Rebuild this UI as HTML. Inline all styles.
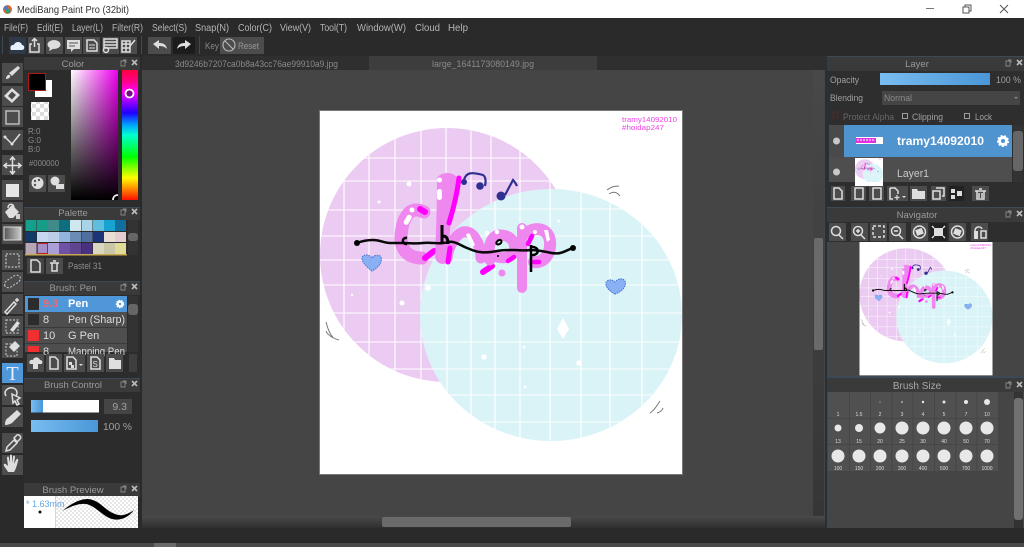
<!DOCTYPE html>
<html><head><meta charset="utf-8"><title>MediBang Paint Pro</title>
<style>
html,body{margin:0;padding:0;background:#2a2a2a;width:1024px;height:547px;overflow:hidden}
svg{display:block;filter:blur(.35px)}
text{font-family:"Liberation Sans",sans-serif;fill:#a8a8a8;font-size:10px}
.m{font-size:10.5px;fill:#b5b5b5}
.h{font-size:9.5px;fill:#9a9a9a;text-anchor:middle}
.b{fill:#4c4c4c}
.i{fill:#dedede}
.s{fill:none;stroke:#dedede;stroke-width:1.5}
.z{font-size:5px;fill:#ddd;text-anchor:middle}
</style></head><body>
<svg width="1024" height="547" viewBox="0 0 1024 547" xmlns="http://www.w3.org/2000/svg">
<defs>
<symbol id="dock" width="20" height="8" viewBox="0 0 20 8"><path d="M1 2h4v5H1zM3 1h3v3" fill="none" stroke="#888" stroke-width=".9"/><path d="M12 1l5 5M17 1l-5 5" stroke="#bbb" stroke-width="1.600"/></symbol>
<clipPath id="cv"><rect x="320" y="111" width="362" height="363"/></clipPath>
<clipPath id="pc"><circle cx="447" cy="255" r="127"/></clipPath>
<clipPath id="bc"><ellipse cx="551" cy="315" rx="131" ry="126"/></clipPath>
<linearGradient id="hue" x1="0" y1="0" x2="0" y2="1">
<stop offset="0" stop-color="#ff0040"/><stop offset=".08" stop-color="#ff0080"/><stop offset=".17" stop-color="#ff00ff"/><stop offset=".33" stop-color="#2000ff"/><stop offset=".42" stop-color="#00a0ff"/><stop offset=".5" stop-color="#00ffd0"/><stop offset=".67" stop-color="#00ff00"/><stop offset=".83" stop-color="#ffff00"/><stop offset="1" stop-color="#ff1000"/>
</linearGradient>
<linearGradient id="sv1"><stop offset="0" stop-color="#fff"/><stop offset="1" stop-color="#f000f0"/></linearGradient>
<linearGradient id="sv2" x1="0" y1="0" x2="0" y2="1"><stop offset="0" stop-color="#000" stop-opacity="0"/><stop offset="1" stop-color="#000"/></linearGradient>
<linearGradient id="blu"><stop offset="0" stop-color="#79bdf0"/><stop offset="1" stop-color="#4a96d8"/></linearGradient>
<linearGradient id="gry"><stop offset="0" stop-color="#555"/><stop offset="1" stop-color="#ccc"/></linearGradient>
<linearGradient id="sb" x1="0" y1="0" x2="0" y2="1"><stop offset="0" stop-color="#4a4a4a"/><stop offset="1" stop-color="#2c2c2c"/></linearGradient>
<pattern id="chk" width="8" height="8" patternUnits="userSpaceOnUse"><rect width="8" height="8" fill="#fff"/><rect width="4" height="4" fill="#ddd"/><rect x="4" y="4" width="4" height="4" fill="#ddd"/></pattern>
<pattern id="chk2" width="4" height="4" patternUnits="userSpaceOnUse"><rect width="4" height="4" fill="#fff"/><rect width="2" height="2" fill="#e6e6e6"/><rect x="2" y="2" width="2" height="2" fill="#e6e6e6"/></pattern>
<g id="art">
<rect x="320" y="111" width="362" height="363" fill="#fff"/>
<g clip-path="url(#cv)">
<circle cx="447" cy="255" r="127" fill="#eccbf2"/>
<g clip-path="url(#pc)" stroke="#fff" stroke-width="1.100">
<path d="M344 120V390M369 120V390M395 120V390M421 120V390M446 120V390M471 120V390M491 120V390M520 120V390M550 120V390M320 158H580M320 181H580M320 210H580M320 236H580M320 260H580M320 285H580M320 313H580M320 342H580M320 369H580"/>
<circle cx="409" cy="184" r="2.500" fill="#fff" stroke="none"/><circle cx="379" cy="202" r="1.500" fill="#fff" stroke="none"/><circle cx="402" cy="303" r="2.500" fill="#fff" stroke="none"/><circle cx="352" cy="295" r="1.200" fill="#fff" stroke="none"/>
</g>
<ellipse cx="551" cy="315" rx="131" ry="126" fill="#d9f3f7"/>
<g clip-path="url(#bc)" stroke="#fff" stroke-width="1.100">
<path d="M447 180V450M471 180V450M495 180V450M520 180V450M550 180V450M581 180V450M610 180V450M642 180V450M420 209H690M420 236H690M420 260H690M420 285H690M420 313H690M420 342H690M420 369H690M420 395H690M420 422H690"/>
<g fill="#fff" stroke="none"><circle cx="484" cy="357" r="2.800"/><circle cx="579" cy="363" r="2.800"/><circle cx="524" cy="347" r="1.500"/><circle cx="525" cy="387" r="1.500"/><circle cx="428" cy="288" r="2.800"/><circle cx="559" cy="221" r="1.500"/><path d="M563 318l6 11-6 10-6-10z"/></g>
</g>
<!-- lettering -->
<g fill="none" stroke-linecap="round" stroke-linejoin="round">
<path d="M424 212C418 209 412 209 408 214C403 220 401 230 401 240C402 252 410 258 422 258" stroke="#ee88ee" stroke-width="13"/>
<path d="M420 209l5 3" stroke="#ff00ff" stroke-width="6"/>
<path d="M425 258l9-7" stroke="#ff00ff" stroke-width="6"/>
<path d="M437 178C441 171 455 171 459 180C459 195 454 210 451 222C449 235 449 250 449 260C445 266 438 265 435 258C436 235 437 205 437 178Z" fill="#ee88ee"/>
<path d="M459 178C457 195 453 210 449 223" stroke="#ff00ff" stroke-width="5"/>
<path d="M447 258C448 250 452 240 458 235C464 229 471 232 475 238C479 244 481 250 481 258" stroke="#ee88ee" stroke-width="11"/>
<path d="M448 262l2-14" stroke="#ff00ff" stroke-width="5"/>
<path d="M483 272l9-6" stroke="#ff00ff" stroke-width="6"/>
<path d="M490 260C487 245 492 235 500 235C510 235 517 242 514 252C510 259 500 259 493 255" stroke="#ee88ee" stroke-width="11"/>
<path d="M522 228V288" stroke="#ee88ee" stroke-width="10"/>
<path d="M527 233C535 226 549 228 550 242C551 254 544 263 534 262" stroke="#ee88ee" stroke-width="12"/>
<path d="M514 257l-6 4M532 236l-4 8M534 262h5" stroke="#ff00ff" stroke-width="4.500"/>
</g>
<g fill="#fff"><rect x="437" y="189" width="5" height="11" rx="2.500"/><circle cx="439.500" cy="180" r="2.500"/><rect x="405" y="214" width="5" height="11" rx="2.500" transform="rotate(30 407 220)"/><circle cx="412" cy="210" r="2.500"/><path d="M466 235a2.500 2.500 0 0 1 4-1l5 11-3 2z"/><circle cx="487" cy="233" r="2.200"/><circle cx="497" cy="232" r="2.200"/><circle cx="522" cy="227" r="2.500"/><circle cx="535" cy="232" r="2"/><path d="M544 230l4 0 2 10-3 2z"/></g>
<circle cx="502" cy="273" r="3.500" fill="#ee88ee"/>
<!-- wavy line -->
<path d="M357 243C362 241 368 240 373 240C380 240 384 243 390 243C395 243 399 243 403 243C410 243 416 244 423 243C430 242 437 244 443 243C447 243 450 241 453 242C458 243 462 246 467 248C472 250 476 252 480 252C486 253 491 252 497 251C502 250 508 250 513 250C519 250 525 251 530 250C536 250 541 251 547 252C551 253 556 254 560 253C565 252 569 249 573 248" fill="none" stroke="#0a0a0a" stroke-width="2.500" stroke-linecap="round"/>
<circle cx="357" cy="243" r="3" fill="#000"/><circle cx="573" cy="248" r="3" fill="#000"/>
<path d="M407 238C402 237 401 244 407 244M531 245V272M531 247C540 246 540 256 531 255" fill="none" stroke="#000" stroke-width="2.500"/>
<path d="M442 225V243M443 236C447 236 448 240 448 244" fill="none" stroke="#000" stroke-width="3"/>
<path d="M496 243C499 238 503 240 501 243C499 245 497 245 496 243" fill="none" stroke="#000" stroke-width="2"/>
<circle cx="498" cy="256" r="1" fill="#000"/>
<!-- notes -->
<g fill="none" stroke="#2f2f90" stroke-width="2.200"><path d="M464 180C466 172 472 172 483 175C486 177 486 182 485 186"/><path d="M505 195L513 180C514 181 516 184 517 186"/></g>
<g fill="#2f2f90"><circle cx="464" cy="182" r="3"/><circle cx="480" cy="186" r="3.800"/><circle cx="501" cy="196" r="4.500"/></g>
<!-- hearts -->
<path d="M372 271C364 265 360 259 363 256C366 254 370 255 372 258C374 255 379 254 381 257C383 262 378 268 372 271Z" fill="#8ab0f4" stroke="#3f6fd0" stroke-width="1" stroke-dasharray="1.500 1"/>
<path d="M615 294C607 290 604 284 607 281C610 279 613 280 615 282C618 278 623 278 625 281C627 286 622 292 615 294Z" fill="#8ab0f4" stroke="#3f6fd0" stroke-width="1" stroke-dasharray="1.500 1"/>
<!-- ticks -->
<g fill="none" stroke="#777" stroke-width="1"><path d="M607 190C611 187 614 186 619 186M609 194C613 191 617 192 620 196M326 322C328 330 331 336 333 337M326 331C328 336 335 339 339 340M650 413C655 410 657 405 660 401M657 413C660 412 662 411 663 408"/></g>
<text x="622" y="122" style="font-size:7.500px;fill:#f044e8" textLength="55" lengthAdjust="spacingAndGlyphs">tramy14092010</text>
<text x="622" y="130" style="font-size:7.500px;fill:#f044e8" textLength="42" lengthAdjust="spacingAndGlyphs">#hoidap247</text>
</g>
</g>
</defs>

<rect width="1024" height="547" fill="#2a2a2a"/>
<!-- title bar -->
<rect width="1024" height="18" fill="#fff"/>
<circle cx="7.500" cy="9.500" r="4.500" fill="#d66a3a"/><circle cx="8" cy="11" r="2.500" fill="#3a9a6a"/><circle cx="6" cy="8" r="2" fill="#4a7ac8"/>
<text x="17" y="13" style="font-size:10.500px;fill:#333" textLength="112" lengthAdjust="spacingAndGlyphs">MediBang Paint Pro (32bit)</text>
<path d="M926 8.500h8" stroke="#777" stroke-width="1"/>
<path d="M963 7h6v6h-6zM965 7V5h6v6h-2" fill="none" stroke="#555" stroke-width="1"/>
<path d="M1000 5l8 8M1008 5l-8 8" stroke="#555" stroke-width="1"/>

<!-- menu -->
<g class="menu">
<text class="m" x="4" y="31" textLength="24" lengthAdjust="spacingAndGlyphs">File(F)</text>
<text class="m" x="37" y="31" textLength="26" lengthAdjust="spacingAndGlyphs">Edit(E)</text>
<text class="m" x="72" y="31" textLength="31" lengthAdjust="spacingAndGlyphs">Layer(L)</text>
<text class="m" x="112" y="31" textLength="31" lengthAdjust="spacingAndGlyphs">Filter(R)</text>
<text class="m" x="152" y="31" textLength="35" lengthAdjust="spacingAndGlyphs">Select(S)</text>
<text class="m" x="195" y="31" textLength="34" lengthAdjust="spacingAndGlyphs">Snap(N)</text>
<text class="m" x="238" y="31" textLength="34" lengthAdjust="spacingAndGlyphs">Color(C)</text>
<text class="m" x="280" y="31" textLength="31" lengthAdjust="spacingAndGlyphs">View(V)</text>
<text class="m" x="320" y="31" textLength="27" lengthAdjust="spacingAndGlyphs">Tool(T)</text>
<text class="m" x="357" y="31" textLength="49" lengthAdjust="spacingAndGlyphs">Window(W)</text>
<text class="m" x="415" y="31" textLength="25" lengthAdjust="spacingAndGlyphs">Cloud</text>
<text class="m" x="448" y="31" textLength="20" lengthAdjust="spacingAndGlyphs">Help</text>
</g>

<!-- toolbar -->
<rect x="2" y="36" width="1" height="18" fill="#3a4a5a"/>
<g class="b"><rect x="9" y="37" width="17" height="17" fill="#2e3a48"/><rect x="28" y="37" width="16" height="17"/><rect x="46" y="37" width="17" height="17"/><rect x="65" y="37" width="17" height="17"/><rect x="83" y="37" width="17" height="17"/><rect x="102" y="37" width="17" height="17"/><rect x="120" y="37" width="17" height="17"/><rect x="148" y="37" width="23" height="17"/></g>
<rect x="173" y="37" width="22" height="17" fill="#1c1c1c"/>
<rect x="141" y="36" width="1" height="18" fill="#3a4a5a"/><rect x="199" y="36" width="1" height="18" fill="#3a4a5a"/>
<rect x="220" y="37" width="44" height="17" fill="#4c4c4c"/>
<path d="M11 50c-2-4 2-6 3-5 1-4 7-4 8 0 3 0 3 5 0 5z" fill="#e8f2ff"/>
<path d="M32 44h-2v8h9v-8h-2M34.500 47v-8M32 41l2.500-2.500L37 41" class="s" stroke-width="1.200"/>
<ellipse cx="54" cy="44.500" rx="6.500" ry="4.500" class="i"/><path d="M50 47l-1 4 4-2z" class="i"/>
<rect x="67" y="40" width="13" height="9" class="i"/><path d="M71 49v3l3-3z" class="i"/><path d="M69 43h9M69 46h6" stroke="#555"/>
<path d="M87 40h7l3 3v8H87z" class="s" stroke-width="1"/><path d="M89 45h6M89 48h6" stroke="#ddd"/>
<path d="M104 39h13v9h-13zM104 42h13M104 45h13" class="s" stroke-width="1"/><circle cx="106" cy="50" r="2.500" class="s" stroke-width="1"/>
<path d="M122 41h8v11h-8zM122 44h8M122 48h8M126 41v11" class="s" stroke-width="1.400"/><path d="M130 46l5-6" stroke="#ddd" stroke-width="1.500"/>
<path d="M153 44l6-4v3c4 0 7 1 8 6-2-2-4-3-8-3v3z" class="i"/>
<path d="M191 44l-6-4v3c-4 0-7 1-8 6 2-2 4-3 8-3v3z" class="i"/>
<text x="205" y="49" style="fill:#888;font-size:9.500px" textLength="14" lengthAdjust="spacingAndGlyphs">Key</text>
<circle cx="229" cy="45" r="6" fill="none" stroke="#bbb" stroke-width="1.100"/><path d="M225 41l8 8" stroke="#bbb" stroke-width="1.100"/>
<text x="238" y="49" style="fill:#999;font-size:9.500px" textLength="21" lengthAdjust="spacingAndGlyphs">Reset</text>

<!-- tabs -->
<rect x="142" y="56" width="683" height="14" fill="#2f2f2f"/>
<rect x="369" y="56" width="228" height="14" fill="#3d3d3d"/>
<text x="175" y="67" style="fill:#8a8a8a;font-size:9.500px" textLength="163" lengthAdjust="spacingAndGlyphs">3d9246b7207ca0b8a43cc76ae99910a9.jpg</text>
<text x="432" y="67" style="fill:#8a8a8a;font-size:9.500px" textLength="102" lengthAdjust="spacingAndGlyphs">large_1641173080149.jpg</text>

<!-- canvas -->
<rect x="142" y="70" width="683" height="446" fill="#454545"/>
<rect x="319" y="110" width="364" height="365" fill="#777"/>
<use href="#art"/>

<!-- canvas scrollbars -->
<rect x="813" y="70" width="11" height="446" fill="url(#sb)" opacity=".6"/>
<rect x="814" y="238" width="9" height="112" rx="2" fill="#6a6a6a"/>
<rect x="142" y="516" width="683" height="13" fill="url(#sb)"/>
<rect x="382" y="517" width="189" height="10" rx="2" fill="#6a6a6a"/>
<rect x="825" y="56" width="2" height="472" fill="#26303a"/>

<!-- left tools -->
<g class="b">
<rect x="2" y="63" width="21" height="20"/><rect x="2" y="86" width="21" height="20"/><rect x="2" y="107" width="21" height="20"/><rect x="2" y="130" width="21" height="20"/><rect x="2" y="155" width="21" height="20"/><rect x="2" y="180" width="21" height="20"/><rect x="2" y="202" width="21" height="20"/><rect x="2" y="224" width="21" height="20"/><rect x="2" y="250" width="21" height="20"/><rect x="2" y="272" width="21" height="20"/><rect x="2" y="294" width="21" height="20"/><rect x="2" y="316" width="21" height="20"/><rect x="2" y="338" width="21" height="20"/><rect x="2" y="385" width="21" height="20"/><rect x="2" y="407" width="21" height="20"/><rect x="2" y="433" width="21" height="20"/><rect x="2" y="455" width="21" height="20"/>
</g>
<rect x="2" y="363" width="21" height="20" fill="#4f97d8"/>
<path d="M6 79c0-3 2-5 4-4 1 2-1 4-4 4zM9 73l9-7 2 2-8 8z" class="i"/>
<path d="M12 88l8 7-8 8-8-7zM12 91.500l-4 4.500 4 3.500 4-4.500z" class="i" fill-rule="evenodd"/>
<rect x="6" y="111" width="13" height="13" class="s" style="stroke:#bbb"/>
<path d="M5 137l4 4 3 3 8-10" class="s" stroke-width="2"/><circle cx="5" cy="137" r="1.500" class="i"/><circle cx="12" cy="144" r="1.500" class="i"/>
<path d="M12.500 157v17M4 165.500h17M10 160l2.500-3 2.500 3M10 171l2.500 3 2.500-3M7 163l-3 2.500 3 2.500M18 163l3 2.500-3 2.500" class="s" stroke-width="1.400"/>
<rect x="6" y="184" width="13" height="13" fill="#e6e6e6"/>
<path d="M5 212l7-7 7 7-6 6H9z" class="i"/><path d="M8 208c0-5 6-5 6 0" class="s"/><rect x="16" y="214" width="4" height="5" fill="#cfcfcf"/>
<rect x="4" y="227" width="17" height="13" fill="url(#gry)" stroke="#ddd"/>
<rect x="6" y="254" width="13" height="13" fill="none" stroke="#bbb" stroke-width="1.300" stroke-dasharray="2 1.500"/>
<path d="M5 286c-2-5 4-6 7-9 4-3 10-2 8 3-2 4-6 4-9 7-2 1-5 1-6-1z" fill="none" stroke="#bbb" stroke-width="1.200" stroke-dasharray="2 1.500"/>
<path d="M5 312l9-10 2 2-9 10zM17 298v4M15 300h4" class="s" stroke-width="1.700"/>
<rect x="6" y="320" width="12" height="13" fill="none" stroke="#bbb" stroke-width="1.200" stroke-dasharray="2 1.500"/><path d="M10 330l7-9 3 2-7 9z" class="i"/>
<rect x="6" y="344" width="11" height="12" fill="none" stroke="#bbb" stroke-width="1.200" stroke-dasharray="2 1.500"/><path d="M9 347l6-6 5 5-6 6z" class="i"/>
<text x="12.500" y="380" style="font-family:'Liberation Serif',serif;font-size:20px;fill:#e8f0ff;text-anchor:middle">T</text>
<path d="M6 396c-3-5 2-9 7-8 4 1 5 5 3 8M12 394l8 4-3 2 2 4-2 1-2-4-2 2z" class="s" stroke-width="1.200"/>
<path d="M5 425c0-4 1-6 3-7l9-8 4 4-9 9c-2 1-4 2-7 2z" class="i"/>
<path d="M6 451l1-4 7-7 3 3-7 7zM14 438l3-3c2-1 5 2 3 4l-3 3z" class="s" stroke-width="1.400"/>
<path d="M8 472c-2-4-5-6-4-8 1-1 3 1 4 2l-1-8c0-2 2-2 2 0l1 5v-7c0-2 2-2 2 0v7l1-6c0-2 2-2 2 0l-1 7 2-4c1-2 3-1 2 1-1 4-2 8-4 11z" class="i"/>

<!-- Color panel -->
<rect x="24" y="57" width="116" height="150" fill="#2c2c2c"/>
<rect x="24" y="57" width="116" height="13" fill="#3a3a3a"/>
<text class="h" x="73" y="67">Color</text><use href="#dock" x="120" y="59"/>
<rect x="35" y="80" width="17" height="17" fill="#fff"/>
<rect x="28.500" y="73.500" width="17" height="17" fill="#000" stroke="#b01818" stroke-width="1"/>
<rect x="31" y="102" width="18" height="18" fill="url(#chk)"/>
<text x="28" y="134" style="font-size:8px;fill:#8a8a8a">R:0</text><text x="28" y="143" style="font-size:8px;fill:#8a8a8a">G:0</text><text x="28" y="152" style="font-size:8px;fill:#8a8a8a">B:0</text>
<text x="29" y="166" style="font-size:8px;fill:#8a8a8a" textLength="30" lengthAdjust="spacingAndGlyphs">#000000</text>
<rect x="29" y="175" width="17" height="17" fill="#4c4c4c"/><rect x="48" y="175" width="17" height="17" fill="#4c4c4c"/>
<circle cx="37.500" cy="183" r="6" class="i"/><circle cx="35" cy="181" r="1.200" fill="#555"/><circle cx="39" cy="180" r="1.200" fill="#555"/><circle cx="35" cy="185" r="1.200" fill="#555"/>
<circle cx="55" cy="181" r="4.500" class="i"/><rect x="56" y="184" width="8" height="5" fill="#ddd"/>
<rect x="71" y="70" width="47" height="130" fill="url(#sv1)"/><rect x="71" y="70" width="47" height="130" fill="url(#sv2)"/>
<rect x="122" y="70" width="16" height="130" fill="url(#hue)"/>
<circle cx="129.500" cy="93.500" r="4" fill="#7a0a8a" stroke="#fff" stroke-width="1.800"/>
<path d="M113 200c0-3 2-5 5-5" fill="none" stroke="#eee" stroke-width="1.800"/>

<!-- Palette -->
<rect x="24" y="207" width="116" height="73" fill="#2c2c2c"/>
<rect x="24" y="207" width="116" height="1" fill="#3c4a58"/>
<rect x="24" y="208" width="116" height="12" fill="#3a3a3a"/>
<text class="h" x="73" y="216">Palette</text><use href="#dock" x="120" y="208"/>
<g>
<rect x="25.500" y="220" width="11" height="11" fill="#15a08e"/><rect x="37" y="220" width="11" height="11" fill="#179c88"/><rect x="48" y="220" width="11" height="11" fill="#3f8a8a"/><rect x="59" y="220" width="11" height="11" fill="#0f6d80"/><rect x="70" y="220" width="11" height="11" fill="#cfe8ee"/><rect x="81.500" y="220" width="11" height="11" fill="#a9d4e8"/><rect x="93" y="220" width="11" height="11" fill="#5fbde0"/><rect x="104" y="220" width="11" height="11" fill="#16a3cf"/><rect x="115" y="220" width="11" height="11" fill="#106f9c"/>
<rect x="25.500" y="232" width="11" height="10" fill="#133a66"/><rect x="37" y="232" width="11" height="10" fill="#c5d8ee"/><rect x="48" y="232" width="11" height="10" fill="#bccde6"/><rect x="59" y="232" width="11" height="10" fill="#93b4de"/><rect x="70" y="232" width="11" height="10" fill="#6b8db5"/><rect x="81.500" y="232" width="11" height="10" fill="#4f6f9f"/><rect x="93" y="232" width="11" height="10" fill="#1c3578"/><rect x="104" y="232" width="11" height="10" fill="#eadfd5"/><rect x="115" y="232" width="11" height="10" fill="#e2cdd0"/>
<rect x="25.500" y="243" width="11" height="11" fill="#b6a6b8"/><rect x="37.500" y="243.500" width="10" height="10" fill="#a68fc8" stroke="#c02020"/><rect x="48" y="243" width="11" height="11" fill="#ab9fd8"/><rect x="59" y="243" width="11" height="11" fill="#6f52a8"/><rect x="70" y="243" width="11" height="11" fill="#5f4590"/><rect x="81.500" y="243" width="11" height="11" fill="#4a3080"/><rect x="93" y="243" width="11" height="11" fill="#d8d8c0"/><rect x="104" y="243" width="11" height="11" fill="#c8c8a8"/><rect x="115" y="243" width="11" height="11" fill="#e0dc98"/>
<rect x="25" y="254" width="102" height="1.500" fill="#c8a850"/>
</g>
<rect x="128" y="220" width="10" height="35" fill="#333"/><rect x="128" y="233" width="10" height="8" rx="3" fill="#666"/>
<rect x="27" y="258" width="17" height="16" fill="#454545"/><rect x="46" y="258" width="17" height="16" fill="#4c4c4c"/>
<path d="M31 260h6l3 3v9h-9z" class="s" stroke-width="1"/>
<path d="M50 263h9M52 263v8h5v-8M53 261h3" class="s" stroke-width="1.200"/>
<text x="68" y="269" style="font-size:9px;fill:#8f8f8f" textLength="34" lengthAdjust="spacingAndGlyphs">Pastel 31</text>

<!-- Brush -->
<rect x="24" y="280" width="116" height="97" fill="#2c2c2c"/>
<rect x="24" y="281" width="116" height="1" fill="#3c4a58"/>
<rect x="24" y="282" width="116" height="13" fill="#3a3a3a"/>
<text class="h" x="73" y="291">Brush: Pen</text><use href="#dock" x="120" y="283"/>
<rect x="25" y="296" width="102" height="16" fill="#4f97d8"/>
<rect x="25" y="312" width="102" height="40" fill="#4e4e4e"/>
<path d="M25 327.500h102M25 343.500h102" stroke="#3a3a3a"/>
<rect x="28" y="298" width="11" height="12" fill="#2c2c2c"/>
<rect x="28" y="314" width="11" height="11" fill="#2c2c2c"/>
<rect x="28" y="330" width="11" height="11" fill="#f03030"/>
<rect x="28" y="346" width="11" height="6" fill="#f03030"/>
<text x="43" y="307" style="font-size:11px;font-weight:bold;fill:#f06a6a">9.3</text>
<text x="68" y="307" style="font-size:11px;font-weight:bold;fill:#fff">Pen</text>
<circle cx="120" cy="304" r="3.500" fill="#fff" stroke="#fff" stroke-width="1.500" stroke-dasharray="1.500 1"/><circle cx="120" cy="304" r="1.200" fill="#4f97d8"/>
<text x="43" y="323" style="font-size:11px;fill:#ddd">8</text><text x="68" y="323" style="font-size:11px;fill:#ddd" textLength="57" lengthAdjust="spacingAndGlyphs">Pen (Sharp)</text>
<text x="43" y="339" style="font-size:11px;fill:#ddd">10</text><text x="68" y="339" style="font-size:11px;fill:#ddd">G Pen</text>
<svg x="25" y="344" width="102" height="8" viewBox="25 344 102 8"><text x="43" y="355" style="font-size:11px;fill:#ddd">8</text><text x="68" y="355" style="font-size:11px;fill:#ddd" textLength="57" lengthAdjust="spacingAndGlyphs">Mapping Pen</text></svg>
<rect x="128" y="296" width="10" height="56" fill="#333"/><rect x="128" y="304" width="10" height="11" rx="3" fill="#666"/>
<g class="b"><rect x="27" y="354" width="17" height="18"/><rect x="46" y="354" width="16" height="18"/><rect x="64" y="354" width="21" height="18"/><rect x="87" y="354" width="17" height="18"/><rect x="106" y="354" width="17" height="18"/><rect x="129" y="354" width="8" height="18" fill="#3e3e3e"/></g>
<path d="M30 364c-2-3 1-5 3-4 1-4 6-3 7 0 3 0 3 4 1 4h-3v5h-5v-5z" class="i"/>
<path d="M50 357h5l3 3v9h-8z" class="s" stroke-width="1"/>
<path d="M67 357h6l3 3v9h-9z" class="s" stroke-width="1"/><rect x="69" y="362" width="3" height="3" class="i"/><rect x="71" y="365" width="3" height="3" class="i"/><path d="M79 364h4l-2 2z" class="i"/>
<path d="M91 357h6l3 3v9h-9z" class="s" stroke-width="1"/><text x="92.500" y="367" style="font-size:8px;fill:#ddd">S</text>
<path d="M109 358h5l1 2h6v9h-12z" class="i"/>

<!-- Brush Control -->
<rect x="24" y="377" width="116" height="106" fill="#2c2c2c"/>
<rect x="24" y="378" width="116" height="1" fill="#3c4a58"/>
<rect x="24" y="379" width="116" height="13" fill="#3a3a3a"/>
<text class="h" x="73" y="388">Brush Control</text><use href="#dock" x="120" y="380"/>
<rect x="31" y="400" width="68" height="12.500" fill="#fff"/><rect x="31" y="400" width="12" height="12.500" fill="url(#blu)"/>
<rect x="104" y="399" width="28" height="15" fill="#454545"/>
<text x="127" y="410" style="font-size:10.500px;fill:#a0a0a0;text-anchor:end">9.3</text>
<rect x="31" y="420" width="67" height="12" fill="url(#blu)"/>
<text x="103" y="430" style="font-size:10.500px;fill:#a0a0a0" textLength="29" lengthAdjust="spacingAndGlyphs">100 %</text>

<!-- Brush Preview -->
<rect x="24" y="483" width="116" height="14" fill="#3a3a3a"/>
<text class="h" x="73" y="493">Brush Preview</text><use href="#dock" x="120" y="485"/>
<rect x="24" y="496" width="114" height="32" fill="#fff"/>
<rect x="56" y="496" width="82" height="32" fill="url(#chk2)"/>
<rect x="55" y="496" width=".8" height="32" fill="#ccc"/>
<svg x="24" y="496" width="31" height="32"><text x="2" y="11" style="font-size:9px;fill:#6aa8e0">* 1.63mm</text></svg>
<circle cx="40" cy="512" r="1.500" fill="#111"/>
<path d="M62 511C70 505 78 499 88 499C100 500 104 510 115 514C122 517 128 514 134 510C128 518 120 521 112 519C102 516 96 506 86 504C78 503 70 507 62 511Z" fill="#000"/>

<!-- Right: Layer -->
<rect x="827" y="56" width="197" height="152" fill="#2e2e2e"/>
<rect x="827" y="56" width="197" height="1" fill="#3c4a58"/>
<rect x="827" y="57" width="197" height="14" fill="#3a3a3a"/>
<text class="h" x="917" y="67">Layer</text><use href="#dock" x="1005" y="59"/>
<text x="830" y="83" style="font-size:9.500px;fill:#a0a0a0" textLength="29" lengthAdjust="spacingAndGlyphs">Opacity</text>
<rect x="880" y="73" width="110" height="12" fill="url(#blu)"/>
<text x="996" y="83" style="font-size:9.500px;fill:#a0a0a0" textLength="25" lengthAdjust="spacingAndGlyphs">100 %</text>
<text x="830" y="101" style="font-size:9.500px;fill:#a0a0a0" textLength="33" lengthAdjust="spacingAndGlyphs">Blending</text>
<rect x="882" y="91" width="138" height="14" fill="#454545"/>
<text x="884" y="101" style="font-size:9.500px;fill:#8a8a8a" textLength="28" lengthAdjust="spacingAndGlyphs">Normal</text>
<path d="M1014 97h4l-2 2z" fill="#888"/>
<rect x="833" y="112" width="5" height="6" fill="none" stroke="#5a2a2a" stroke-width=".8"/>
<text x="843" y="120" style="font-size:9.500px;fill:#666" textLength="51" lengthAdjust="spacingAndGlyphs">Protect Alpha</text>
<rect x="902.500" y="113.500" width="5" height="5" fill="none" stroke="#aaa" stroke-width=".9"/>
<text x="912" y="120" style="font-size:9.500px;fill:#a0a0a0" textLength="31" lengthAdjust="spacingAndGlyphs">Clipping</text>
<rect x="964.500" y="113.500" width="5" height="5" fill="none" stroke="#aaa" stroke-width=".9"/>
<text x="975" y="120" style="font-size:9.500px;fill:#a0a0a0" textLength="17" lengthAdjust="spacingAndGlyphs">Lock</text>
<rect x="829" y="125" width="15" height="32" fill="#4a4a4a"/>
<rect x="844" y="125" width="168" height="32" fill="#4f93cf"/>
<rect x="829" y="157" width="183" height="25" fill="#4e4e4e"/>
<circle cx="836.500" cy="141" r="3.500" fill="#c8c8c8"/><circle cx="836.500" cy="172" r="3.500" fill="#c8c8c8"/>
<rect x="856" y="137" width="27" height="7" fill="#fff"/><rect x="856" y="138" width="20" height="5" fill="#e030e0"/><path d="M857 140h18" stroke="#fff" stroke-width="1" stroke-dasharray="2 1"/>
<text x="897" y="145" style="font-size:11.500px;font-weight:bold;fill:#fff" textLength="87" lengthAdjust="spacingAndGlyphs">tramy14092010</text>
<circle cx="1003" cy="141" r="5" fill="#fff" stroke="#fff" stroke-width="2" stroke-dasharray="2 1.500"/><circle cx="1003" cy="141" r="2" fill="#4f93cf"/>
<svg x="855" y="158" width="28" height="24" viewBox="320 111 362 310"><use href="#art"/></svg>
<text x="897" y="177" style="font-size:11px;fill:#c8c8c8" textLength="32" lengthAdjust="spacingAndGlyphs">Layer1</text>
<rect x="1013" y="125" width="10" height="57" fill="#333"/><rect x="1013" y="131" width="10" height="40" rx="3" fill="#666"/>
<g class="b"><rect x="831" y="186" width="14" height="15"/><rect x="851" y="186" width="15" height="15"/><rect x="869" y="186" width="15" height="15"/><rect x="887" y="186" width="21" height="15"/><rect x="910" y="186" width="17" height="15"/><rect x="931" y="186" width="15" height="15"/><rect x="949" y="186" width="15" height="15" fill="#222"/><rect x="972" y="186" width="17" height="15"/></g>
<path d="M834 188h5l3 3v8h-8z M855 188h8v11h-8z M873 188h8v11h-8z M890 188h5l3 3v3M890 188v11h3" class="s" stroke-width="1"/>
<path d="M897 195v5M894.500 197.500h5" stroke="#ddd" stroke-width="1.200"/><path d="M902 196h4l-2 2z" class="i"/>
<path d="M912 189h5l1 2h7v8h-13z" class="i"/>
<path d="M933 191h7v8h-7zM936 188h8v8h-2" class="s" stroke-width="1"/>
<rect x="951" y="189" width="4" height="4" class="i"/><rect x="951" y="195" width="4" height="4" class="i"/><rect x="957" y="191" width="5" height="5" class="i"/>
<path d="M975 191h11M977 191v8h7v-8M979 189h3M979 193v5M982 193v5" class="s" stroke-width="1.200"/>

<!-- Navigator -->
<rect x="827" y="207" width="197" height="1" fill="#3c4a58"/>
<rect x="827" y="208" width="197" height="14" fill="#3a3a3a"/>
<text class="h" x="917" y="218">Navigator</text><use href="#dock" x="1005" y="210"/>
<rect x="827" y="222" width="197" height="20" fill="#2e2e2e"/>
<g class="b"><rect x="829" y="223" width="17" height="18"/><rect x="851" y="223" width="17" height="18"/><rect x="870" y="223" width="17" height="18"/><rect x="889" y="223" width="17" height="18"/><rect x="911" y="223" width="17" height="18"/><rect x="930" y="223" width="17" height="18" fill="#222"/><rect x="949" y="223" width="17" height="18"/><rect x="971" y="223" width="17" height="18"/></g>
<circle cx="836" cy="231" r="4.500" class="s" stroke-width="1.200"/><path d="M839 235l4 4" class="s"/>
<circle cx="858" cy="231" r="4.500" class="s" stroke-width="1.200"/><path d="M861 235l4 4M856 231h4M858 229v4" class="s" stroke-width="1.200"/>
<rect x="873" y="226" width="11" height="11" class="s" stroke-width="1" stroke-dasharray="3 2"/>
<circle cx="896" cy="231" r="4.500" class="s" stroke-width="1.200"/><path d="M899 235l4 4M894 231h4" class="s" stroke-width="1.200"/>
<circle cx="919.500" cy="232" r="6" class="s" stroke-width="1.300"/><rect x="916" y="229" width="7" height="6" class="i" transform="rotate(-20 919 232)"/>
<rect x="934" y="228" width="9" height="8" class="i"/><path d="M932 226l2 2M945 226l-2 2M932 238l2-2M945 238l-2-2" class="s" stroke-width="1"/>
<circle cx="957.500" cy="232" r="6" class="s" stroke-width="1.300"/><rect x="954" y="229" width="7" height="6" class="i" transform="rotate(20 957 232)"/>
<rect x="974" y="231" width="4" height="8" class="i"/><rect x="981" y="231" width="5" height="7" class="s" stroke-width="1"/><path d="M975 231c0-5 6-5 7-2" class="s" stroke-width="1"/>
<rect x="827" y="242" width="197" height="134" fill="#454545"/>
<use href="#art" transform="translate(859.500 242) scale(.3674) translate(-320 -111)"/>

<!-- Brush Size -->
<rect x="827" y="376" width="197" height="2" fill="#3c4a58"/>
<rect x="827" y="378" width="197" height="14" fill="#3a3a3a"/>
<text x="917" y="389" class="h" style="font-size:10px;fill:#a8a8a8">Brush Size</text><use href="#dock" x="1005" y="381"/>
<rect x="827" y="392" width="197" height="136" fill="#454545"/>
<rect x="828" y="392" width="170" height="79" fill="#505050"/>
<path d="M849.500 392v79M870.500 392v79M892 392v79M913 392v79M934.500 392v79M956 392v79M977 392v79M828 418.500h170M828 444.500h170" stroke="#444" stroke-width=".8"/>
<g fill="#e8e8e8">
<circle cx="880" cy="402" r=".5"/><circle cx="902" cy="402" r=".8"/><circle cx="923" cy="402" r="1.200"/><circle cx="944" cy="402" r="1.500"/><circle cx="966" cy="402" r="2"/><circle cx="987" cy="402" r="3"/>
<circle cx="838" cy="428" r="3.500"/><circle cx="859" cy="428" r="4"/><circle cx="880" cy="428" r="5.500"/><circle cx="902" cy="428" r="6.500"/><circle cx="923" cy="428" r="6.500"/><circle cx="944" cy="428" r="6.500"/><circle cx="966" cy="428" r="6.500"/><circle cx="987" cy="428" r="6.500"/>
<circle cx="838" cy="456" r="6.500"/><circle cx="859" cy="456" r="6.500"/><circle cx="880" cy="456" r="6.500"/><circle cx="902" cy="456" r="6.500"/><circle cx="923" cy="456" r="6.500"/><circle cx="944" cy="456" r="6.500"/><circle cx="966" cy="456" r="6.500"/><circle cx="987" cy="456" r="6.500"/>
</g>
<text class="z" x="838" y="416">1</text><text class="z" x="859" y="416">1.5</text><text class="z" x="880" y="416">2</text><text class="z" x="902" y="416">3</text><text class="z" x="923" y="416">4</text><text class="z" x="944" y="416">5</text><text class="z" x="966" y="416">7</text><text class="z" x="987" y="416">10</text>
<text class="z" x="838" y="443">13</text><text class="z" x="859" y="443">15</text><text class="z" x="880" y="443">20</text><text class="z" x="902" y="443">25</text><text class="z" x="923" y="443">30</text><text class="z" x="944" y="443">40</text><text class="z" x="966" y="443">50</text><text class="z" x="987" y="443">70</text>
<text class="z" x="838" y="470">100</text><text class="z" x="859" y="470">150</text><text class="z" x="880" y="470">200</text><text class="z" x="902" y="470">300</text><text class="z" x="923" y="470">400</text><text class="z" x="944" y="470">500</text><text class="z" x="966" y="470">700</text><text class="z" x="987" y="470">1000</text>
<rect x="1014" y="392" width="9" height="136" fill="#333"/><rect x="1014" y="398" width="9" height="122" rx="3" fill="#707070"/>

<!-- bottom -->
<rect x="0" y="528" width="1024" height="15" fill="#2a2a2a"/>
<rect x="0" y="543" width="1024" height="4" fill="#4a4a4a"/>
<rect x="154" y="543" width="22" height="4" fill="#6a6a6a"/>
</svg>
</body></html>
